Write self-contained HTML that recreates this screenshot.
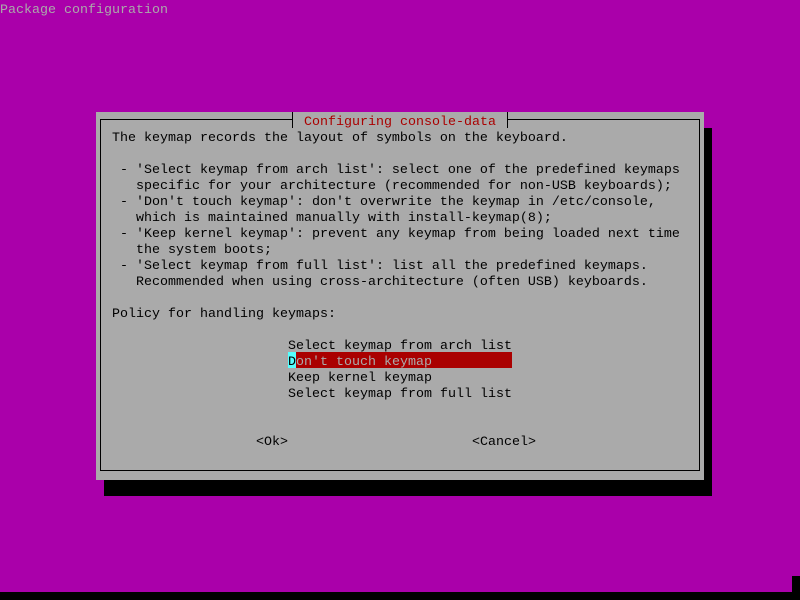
<!DOCTYPE html>
<html><head><meta charset="utf-8"><style>
html,body{margin:0;padding:0}
body{width:800px;height:600px;background:#aa00aa;position:relative;overflow:hidden;font-family:"Liberation Mono","DejaVu Sans Mono",monospace;font-size:13.33px}
.t{position:absolute;white-space:pre;line-height:16px;height:16px;color:#000;margin-top:3px}
.b{position:absolute}
</style></head><body>
<div class="t" style="left:0;top:0;color:#aaaaaa">Package configuration</div>
<div class="b" style="left:104px;top:128px;width:608px;height:368px;background:#000"></div>
<div class="b" style="left:96px;top:112px;width:608px;height:368px;background:#aaaaaa"></div>
<div class="b" style="left:100px;top:119px;width:600px;height:352px;border:1px solid #000;box-sizing:border-box"></div>
<div class="b" style="left:292px;top:112px;width:1px;height:16px;background:#000"></div>
<div class="b" style="left:507px;top:112px;width:1px;height:16px;background:#000"></div>
<div class="b" style="left:293px;top:112px;width:214px;height:15px;background:#aaaaaa"></div>
<div class="t" style="left:304px;top:112px;color:#aa0000">Configuring console-data</div>
<div class="t" style="left:112px;top:128px">The keymap records the layout of symbols on the keyboard.</div>
<div class="t" style="left:112px;top:160px"> - 'Select keymap from arch list': select one of the predefined keymaps</div>
<div class="t" style="left:112px;top:176px">   specific for your architecture (recommended for non-USB keyboards);</div>
<div class="t" style="left:112px;top:192px"> - 'Don't touch keymap': don't overwrite the keymap in /etc/console,</div>
<div class="t" style="left:112px;top:208px">   which is maintained manually with install-keymap(8);</div>
<div class="t" style="left:112px;top:224px"> - 'Keep kernel keymap': prevent any keymap from being loaded next time</div>
<div class="t" style="left:112px;top:240px">   the system boots;</div>
<div class="t" style="left:112px;top:256px"> - 'Select keymap from full list': list all the predefined keymaps.</div>
<div class="t" style="left:112px;top:272px">   Recommended when using cross-architecture (often USB) keyboards.</div>
<div class="t" style="left:112px;top:304px">Policy for handling keymaps:</div>
<div class="t" style="left:288px;top:336px">Select keymap from arch list</div>
<div class="b" style="left:288px;top:352px;width:224px;height:16px;background:#aa0000"></div>
<div class="b" style="left:288px;top:352px;width:8px;height:16px;background:#55ffff"></div>
<div class="t" style="left:288px;top:352px;color:#aaaaaa"><span style="color:#000">D</span>on't touch keymap</div>
<div class="t" style="left:288px;top:368px">Keep kernel keymap</div>
<div class="t" style="left:288px;top:384px">Select keymap from full list</div>
<div class="t" style="left:256px;top:432px">&lt;Ok&gt;</div>
<div class="t" style="left:472px;top:432px">&lt;Cancel&gt;</div>
<div class="b" style="left:792px;top:576px;width:8px;height:24px;background:#000"></div>
<div class="b" style="left:0;top:592px;width:800px;height:8px;background:#000"></div>
</body></html>
